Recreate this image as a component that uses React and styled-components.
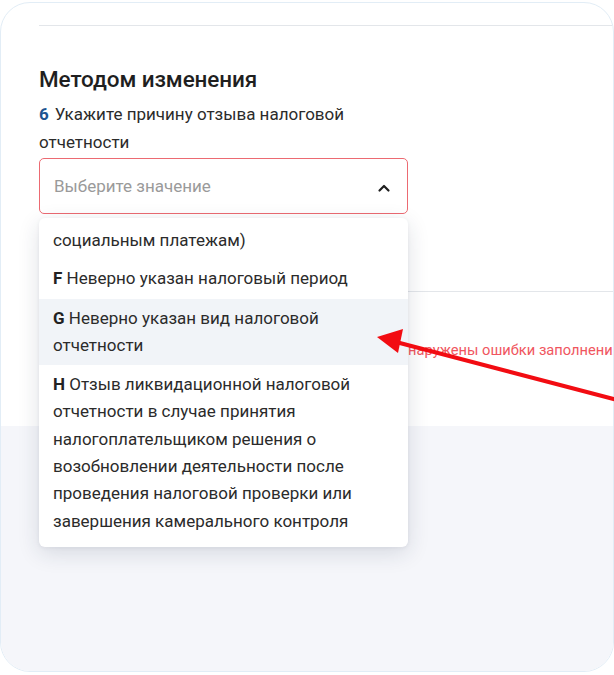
import React from "react";
import styled, { createGlobalStyle } from "styled-components";

const GlobalStyle = createGlobalStyle`
  html, body { margin: 0; padding: 0; background: #ffffff; }
  body { font-family: Roboto, "Noto Sans", Arial, sans-serif; -webkit-font-smoothing: antialiased; }
  * { box-sizing: border-box; }
`;

const Frame = styled.div`
  position: relative;
  width: 614px;
  height: 675px;
  overflow: hidden;
  background: #ffffff;
  padding-top: 2px;
`;

const Card = styled.div`
  height: 670px;
  border: 1px solid #e2edf6;
  border-radius: 30px;
  overflow: hidden;
  display: flex;
  flex-direction: column;
  background: #ffffff;
`;

const Body = styled.section`
  height: 423px;
  padding: 22px 0 0 38px;
  display: flex;
  flex-direction: column;
`;

const Rule = styled.div`
  height: 1px;
  background: #e3e6ea;
  margin-top: ${(p) => p.$mt || 0}px;
`;

const Heading = styled.h2`
  margin: 39px 0 0;
  font-size: 22.5px;
  font-weight: 500;
  line-height: 28px;
  color: #1f1f1f;
  letter-spacing: -0.1px;
`;

const Label = styled.div`
  margin-top: 7px;
  width: 369px;
  font-size: 17px;
  line-height: 28px;
  color: #2b2b2b;
`;

const Num = styled.span`
  color: #1c5490;
  font-weight: 700;
  margin-right: 6px;
`;

const SelectWrap = styled.div`
  position: relative;
  width: 369px;
  margin-top: 2px;
`;

const SelectBox = styled.div`
  height: 56px;
  border: 1.5px solid #ec6a72;
  border-radius: 5px;
  display: flex;
  align-items: center;
  justify-content: space-between;
  padding: 0 14px;
  font-size: 17px;
  color: #9a9a9a;
  background: #fff;
`;

const Chevron = styled.svg`
  width: 14px;
  height: 14px;
  margin-right: 2px;
  margin-top: 3px;
`;

const Menu = styled.ul`
  position: absolute;
  left: 0;
  top: 60px;
  width: 369px;
  margin: 0;
  padding: 0 0 6px;
  list-style: none;
  background: #fff;
  border-radius: 6px;
  box-shadow: 0 6px 22px rgba(30, 40, 70, 0.14), 0 1px 4px rgba(30, 40, 70, 0.06);
  z-index: 2;
`;

const Option = styled.li`
  padding: ${(p) => (p.$cut ? "9px 14px 5px" : "6px 14px")};
  font-size: 17px;
  line-height: 27.3px;
  color: #2b2b2b;
  background: ${(p) => (p.$active ? "#f1f4f8" : "transparent")};
`;

const Code = styled.b`
  font-weight: 700;
  color: #222;
`;

const ErrorRow = styled.div`
  margin-top: 49px;
  padding-left: 351px;
  font-size: 14.7px;
  line-height: 18px;
  color: #f05660;
  white-space: nowrap;
`;

const Footer = styled.section`
  flex: 1;
  background: #f5f6fa;
`;

const Arrow = styled.svg`
  position: absolute;
  left: 0;
  top: 0;
  width: 614px;
  height: 675px;
  pointer-events: none;
  z-index: 5;
`;

export default function App() {
  return (
    <>
      <GlobalStyle />
      <Frame>
        <Card>
          <Body>
            <Rule />
            <Heading>Методом изменения</Heading>
            <Label>
              <Num>6</Num>Укажите причину отзыва налоговой отчетности
            </Label>
            <SelectWrap>
              <SelectBox>
                <span>Выберите значение</span>
                <Chevron viewBox="0 0 14 14" fill="none">
                  <path d="M2.5 9.5 L7 5 L11.5 9.5" stroke="#1f1f1f" strokeWidth="2.2" strokeLinecap="round" strokeLinejoin="round" />
                </Chevron>
              </SelectBox>
              <Menu>
                <Option $cut>социальным платежам)</Option>
                <Option>
                  <Code>F</Code> Неверно указан налоговый период
                </Option>
                <Option $active>
                  <Code>G</Code> Неверно указан вид налоговой отчетности
                </Option>
                <Option>
                  <Code>H</Code> Отзыв ликвидационной налоговой отчетности в случае принятия налогоплательщиком решения о возобновлении деятельности после проведения налоговой проверки или завершения камерального контроля
                </Option>
              </Menu>
            </SelectWrap>
            <Rule $mt={77} />
            <ErrorRow>Обнаружены ошибки заполнения</ErrorRow>
          </Body>
          <Footer />
        </Card>
        <Arrow viewBox="0 0 614 675">
          <line x1="640" y1="406" x2="396" y2="342" stroke="#f20c12" strokeWidth="4" strokeLinecap="round" />
          <polygon points="377,337 403,329 398,353" fill="#f20c12" />
        </Arrow>
      </Frame>
    </>
  );
}
